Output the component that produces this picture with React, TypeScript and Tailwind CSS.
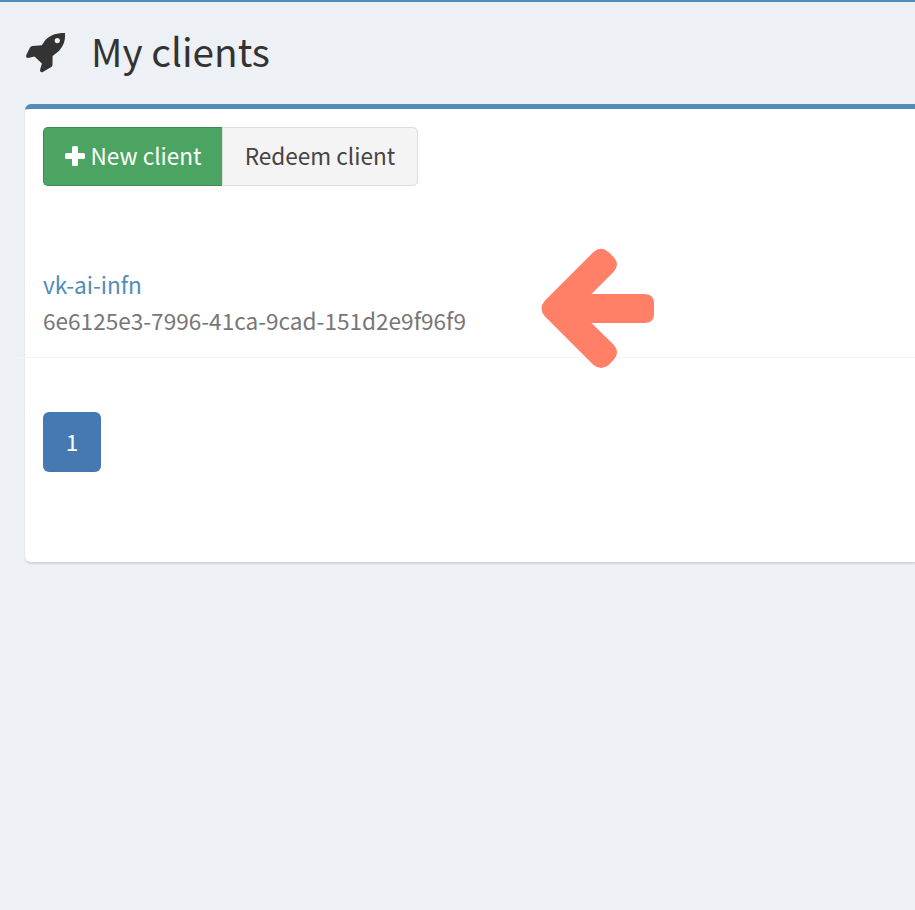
import React from "react";

const textFont = "font-['Noto_Sans_CJK_SC',sans-serif]";

function Rocket() {
  return (
    <svg className="h-10 w-10 shrink-0" viewBox="0 0 40 40" fill="#333">
      <path
        fillRule="evenodd"
        d="M39 0C29.500 0 23.500 2.500 19.200 7.300L15.800 12.300L6.300 12.900Q4.800 13 4 14.400L0.300 22Q-0.600 25 2 25L8.500 23.500L15.900 30.500L14 37Q14.200 40 16.800 39L25.300 34Q26.500 33.200 26.500 31.800L26.600 23L32 18.800C37 14 39.600 8 39 0ZM31.300 5a2.600 2.600 0 1 1 0 5.200a2.600 2.600 0 1 1 0-5.200Z"
      />
    </svg>
  );
}

function Plus() {
  return (
    <svg className="mt-[-2px] h-5 w-5 shrink-0" viewBox="0 0 20 20" fill="#fff">
      <path d="M8.500 0h3Q13 0 13 1.500V7h5.500Q20 7 20 8.500v3Q20 13 18.500 13H13v5.500Q13 20 11.500 20h-3Q7 20 7 18.500V13H1.500Q0 13 0 11.500v-3Q0 7 1.500 7H7V1.500Q7 0 8.500 0Z" />
    </svg>
  );
}

function Arrow() {
  return (
    <svg className="absolute left-[516px] top-[139px] h-[121px] w-[114px]" viewBox="0 0 114 121" fill="#ff8066">
      <path d="M52.500 4Q60 -2.500 67.500 4L73 9.500Q79 16 73 23.500L50.500 46H104Q113 46.500 113 54.500V66.500Q113 74.500 104 75H50.500L73 97Q79 104.500 73 111.500L67.500 117Q60 123 52.500 117L4 68.500Q-3 60.500 4 52.500Z" />
    </svg>
  );
}

export default function App() {
  return (
    <div className={`h-[910px] w-[915px] overflow-hidden border-t-2 border-[#4f8cba] bg-[#edf0f5] text-[22.6px] ${textFont}`}>
      <header className="flex h-[102px] items-start pl-[26px] pt-[31px]">
        <Rocket />
        <h1 className="ml-[25px] mt-[-13px] whitespace-nowrap text-[38.7px] leading-[60px] text-[#333]">My clients</h1>
      </header>
      <main className="relative ml-[25px] h-[458px] rounded-l-[6px] border-t-[5px] border-[#4f8cba] bg-white shadow-[0_2px_2px_rgba(0,0,0,0.12)]">
        <div className="flex h-[77px] pl-[18px] pt-[18px]">
          <button className="flex h-[59px] w-[179px] items-center rounded-l-[5px] border border-r-0 border-[#3d8b54] bg-[#4ba462] pl-[21px] text-white">
            <Plus />
            <span className="mt-[-2px] ml-[5.5px] whitespace-nowrap">New client</span>
          </button>
          <button className="h-[59px] w-[196px] whitespace-nowrap rounded-r-[5px] border border-[#ddd] bg-[#f4f4f4] pb-[2px] text-[#444]">
            Redeem client
          </button>
        </div>
        <section className="-ml-[9px] h-[172px] border-b border-[#f4f4f4] pl-[27px] pt-[81px] leading-[36px]">
          <a className="block w-fit text-[#4f8cba]">vk-ai-infn</a>
          <p className="w-fit whitespace-nowrap text-[#777]">6e6125e3-7996-41ca-9cad-151d2e9f96f9</p>
        </section>
        <nav className="pl-[18px] pt-[54px]">
          <button className="h-[60px] w-[58px] rounded-[6px] bg-[#4679b2] pb-[1px] text-white">1</button>
        </nav>
        <Arrow />
      </main>
    </div>
  );
}
